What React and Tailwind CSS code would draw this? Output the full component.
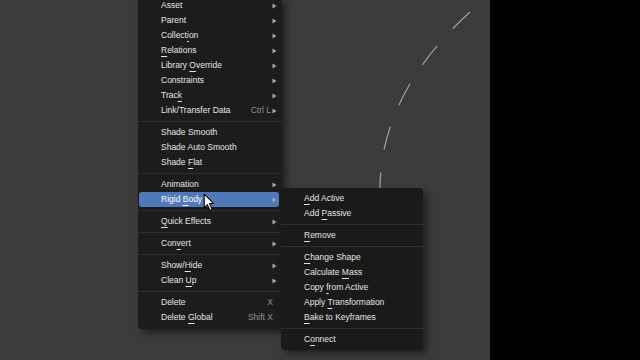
import React from 'react';

const mainItems = [
  { label: 'Asset', arrow: true },
  { label: 'Parent', arrow: true },
  { label: 'Collect&ion', arrow: true },
  { label: '&Relations', arrow: true },
  { label: 'Library &Override', arrow: true },
  { label: 'Constraints', arrow: true },
  { label: 'Trac&k', arrow: true },
  { label: 'Link/Transfer Data', shortcut: 'Ctrl L', arrow: true },
  { sep: true },
  { label: 'Shade Smooth' },
  { label: 'Shade Auto Smooth' },
  { label: 'Shade &Flat' },
  { sep: true },
  { label: 'Animation', arrow: true },
  { label: 'Rigid &Body', arrow: true, active: true },
  { sep: true },
  { label: '&Quick Effects', arrow: true },
  { sep: true },
  { label: 'Con&vert', arrow: true },
  { sep: true },
  { label: 'Show/&Hide', arrow: true },
  { label: 'Clean &Up', arrow: true },
  { sep: true },
  { label: 'Delete', shortcut: 'X' },
  { label: 'Delete &Global', shortcut: 'Shift X' },
];

const subItems = [
  { label: '&Add Active' },
  { label: 'Add &Passive' },
  { sep: true },
  { label: '&Remove' },
  { sep: true },
  { label: '&Change Shape' },
  { label: 'Calculate &Mass' },
  { label: 'Copy &from Active' },
  { label: 'Apply &Transformation' },
  { label: '&Bake to Keyframes' },
  { sep: true },
  { label: 'C&onnect' },
];

// '&' marks the accelerator letter, drawn underlined like Blender does
function Label({ text }) {
  const i = text.indexOf('&');
  if (i < 0) return <span>{text}</span>;
  return (
    <span>
      {text.slice(0, i)}
      <span className="underline decoration-1 underline-offset-[3px]">{text[i + 1]}</span>
      {text.slice(i + 2)}
    </span>
  );
}

function Arrow() {
  return (
    <svg width="5" height="6" viewBox="0 0 5 6" className="ml-[1px]">
      <path d="M0.5 0.5 L4.5 3 L0.5 5.5 Z" fill="#a8a8a8" />
    </svg>
  );
}

function MenuRows({ items }) {
  return items.map((it, idx) =>
    it.sep ? (
      <div key={idx} className="h-[7px] flex items-center">
        <div className="h-px w-full bg-[#2f2f2f]" />
      </div>
    ) : (
      <div
        key={idx}
        className={
          'h-[15px] flex items-center pl-[22px] pr-[2px] ml-[1px] mr-[3px] rounded-[3px] ' +
          (it.active ? 'bg-[#5079ba] text-white' : 'text-[#e4e4e4]')
        }
      >
        <div className="flex-1 whitespace-nowrap">
          <Label text={it.label} />
        </div>
        {it.shortcut && <span className="text-[#8f8f8f]">{it.shortcut}</span>}
        {it.arrow ? <Arrow /> : <span className="w-[4px]" />}
      </div>
    )
  );
}

function Cursor() {
  return (
    <svg width="13" height="19" viewBox="0 0 12 18" className="absolute left-[203px] top-[193px]">
      <path
        d="M1 1 L1 14 L4 11 L6.5 16.5 L8.5 15.5 L6 10 L10 10 Z"
        fill="#ffffff"
        stroke="#000000"
        strokeWidth="1"
        strokeLinejoin="round"
      />
    </svg>
  );
}

export default function App() {
  return (
    <div
      className="w-[640px] h-[360px] flex overflow-hidden text-[8.5px] leading-none"
      style={{ fontFamily: '"Liberation Sans", Arial, sans-serif' }}
    >
      <div className="w-[490px] h-full relative bg-[#3b3b3b] overflow-hidden">
        {/* dashed arc in the viewport */}
        <svg width="490" height="360" className="absolute left-0 top-0">
          <path
            d="M470 12 Q380 94 380 190"
            fill="none"
            stroke="#9c9c9c"
            strokeWidth="1.3"
            strokeDasharray="24 23"
          />
        </svg>

        {/* object menu */}
        <div className="absolute left-[138px] top-[-2px] w-[144px] pb-[4px] bg-[#1c1c1c] rounded-b-[4px] shadow-[4px_4px_6px_rgba(0,0,0,0.45)]">
          <MenuRows items={mainItems} />
        </div>

        {/* rigid body submenu */}
        <div className="absolute left-[281px] top-[188px] w-[142px] py-[3px] bg-[#1a1a1a] rounded-[4px] shadow-[4px_4px_6px_rgba(0,0,0,0.45)]">
          <MenuRows items={subItems} />
        </div>

        <Cursor />
      </div>
      <div className="flex-1 h-full bg-black" />
    </div>
  );
}
